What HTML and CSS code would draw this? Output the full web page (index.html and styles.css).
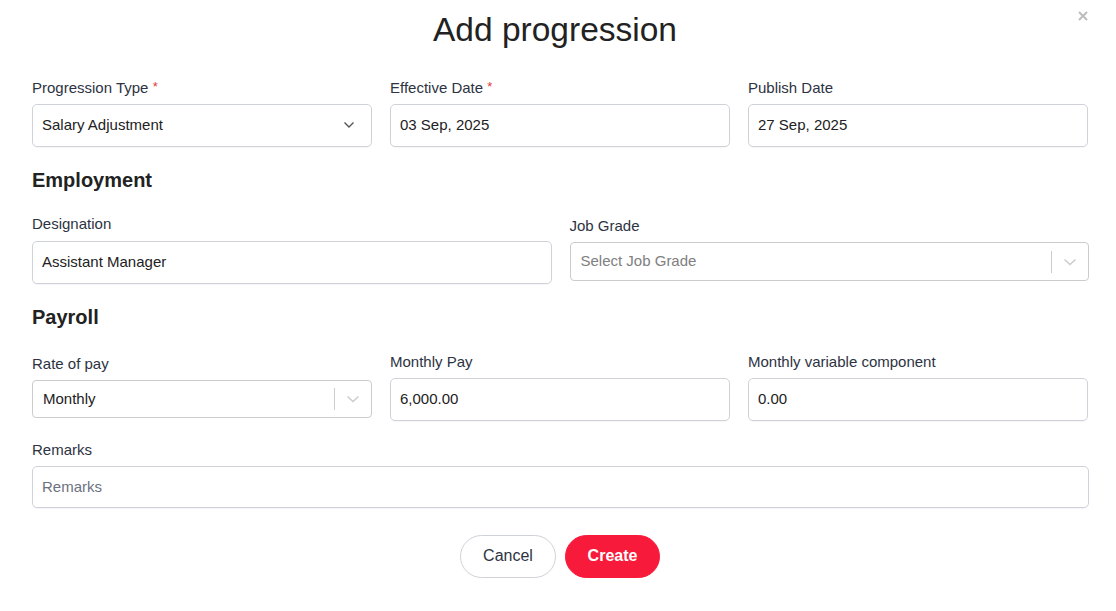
FILE: index.html
```html
<!DOCTYPE html>
<html>
<head>
<meta charset="utf-8">
<link rel="stylesheet" href="styles.css">
</head>
<body>
<div class="modal">
  <button class="close" aria-label="Close">
    <svg width="10" height="10" viewBox="0 0 10 10"><path d="M1 1L9 9M9 1L1 9" stroke="#bdbdbd" stroke-width="2"/></svg>
  </button>
  <h1 class="title">Add progression</h1>

  <div class="row row3col">
    <div class="field">
      <label class="label">Progression Type <span class="req">*</span></label>
      <div class="input select-native">
        <span>Salary Adjustment</span>
        <svg class="chev" width="12" height="8" viewBox="0 0 12 8"><path d="M1.5 1.5L6 6L10.5 1.5" fill="none" stroke="#555" stroke-width="1.4"/></svg>
      </div>
    </div>
    <div class="field">
      <label class="label">Effective Date <span class="req">*</span></label>
      <div class="input">03 Sep, 2025</div>
    </div>
    <div class="field">
      <label class="label">Publish Date</label>
      <div class="input">27 Sep, 2025</div>
    </div>
  </div>

  <h2 class="section">Employment</h2>
  <div class="row row2">
    <div class="field">
      <label class="label">Designation</label>
      <div class="input">Assistant Manager</div>
    </div>
    <div class="field field-rs2">
      <label class="label">Job Grade</label>
      <div class="rselect">
        <span class="placeholder">Select Job Grade</span>
        <span class="sep"></span>
        <svg class="rchev" width="14" height="8" viewBox="0 0 14 8"><path d="M1.5 1.5L7 6.5L12.5 1.5" fill="none" stroke="#ccc" stroke-width="1.5"/></svg>
      </div>
    </div>
  </div>

  <h2 class="section section2">Payroll</h2>
  <div class="row row3col">
    <div class="field field-rs3">
      <label class="label">Rate of pay</label>
      <div class="rselect">
        <span class="value">Monthly</span>
        <span class="sep"></span>
        <svg class="rchev" width="14" height="8" viewBox="0 0 14 8"><path d="M1.5 1.5L7 6.5L12.5 1.5" fill="none" stroke="#ccc" stroke-width="1.5"/></svg>
      </div>
    </div>
    <div class="field">
      <label class="label">Monthly Pay</label>
      <div class="input">6,000.00</div>
    </div>
    <div class="field">
      <label class="label">Monthly variable component</label>
      <div class="input">0.00</div>
    </div>
  </div>

  <div class="field remarks">
    <label class="label">Remarks</label>
    <div class="input remarks-input"><span class="placeholder2">Remarks</span></div>
  </div>

  <div class="actions">
    <button class="btn btn-cancel">Cancel</button>
    <button class="btn btn-create">Create</button>
  </div>
</div>
</body>
</html>
```

FILE: styles.css
```css
* { box-sizing: border-box; }
html, body { margin: 0; padding: 0; background: #fff; }
body {
  font-family: "Liberation Sans", Arial, Helvetica, sans-serif;
  color: #222;
  width: 1116px;
  height: 611px;
  overflow: hidden;
}
.modal {
  position: relative;
  padding: 0 27px 0 32px;
}
.close {
  position: absolute;
  top: 11px;
  right: 28px;
  border: 0;
  background: none;
  padding: 0;
  width: 10px;
  height: 10px;
  display: flex;
}
.title {
  margin: 0;
  padding: 10px 11px 0 0;
  font-size: 33.5px;
  font-weight: 400;
  line-height: 40px;
  text-align: center;
  color: #222;
  height: 79px;
}
.row {
  display: flex;
  gap: 18px;
}
.row3col { padding-right: 1px; }
.field {
  flex: 1 1 0;
  display: flex;
  flex-direction: column;
  min-width: 0;
}
.label {
  font-size: 15px;
  line-height: 18px;
  height: 18px;
  color: #2d3342;
  margin-bottom: 7px;
}
.req { color: #e53935; font-size: 13px; line-height: 0; vertical-align: 2px; }
.input {
  height: 43px;
  border: 1px solid #cfd2d8;
  border-radius: 5px;
  padding: 0 9px 2px;
  display: flex;
  align-items: center;
  font-size: 15px;
  color: #222;
  box-shadow: 0 1px 1px rgba(0,0,0,0.04);
}
.select-native { justify-content: space-between; padding-right: 16px; }
.chev { display: block; }
.section {
  margin: 0;
  font-size: 20px;
  font-weight: 700;
  line-height: 24px;
  color: #222;
  padding-top: 21px;
  height: 68px;
}
.section2 { padding-top: 21px; height: 69px; }
.rselect {
  height: 39px;
  border: 1px solid #cccccc;
  border-radius: 4px;
  display: flex;
  align-items: center;
  padding-left: 10px;
  font-size: 15px;
}
.rselect .placeholder { color: #808080; flex: 1; padding-bottom: 2px; }
.rselect .value { color: #222; flex: 1; padding-bottom: 2px; }
.sep {
  width: 1px;
  height: 22px;
  background: #cccccc;
}
.rchev { margin: 0 11px 0 11px; display: block; }
.field-rs2 .label { margin-top: 2px; }
.field-rs2 .rselect { height: 39px; }
.field-rs3 .label { margin-top: 2px; }
.field-rs3 .rselect { height: 38px; }
.row2 .field:first-child .label { margin-bottom: 8px; }
.remarks { margin-top: 20px; }
.remarks-input { height: 42px; width: 1057px; }
.placeholder2 { color: #6b7280; }
.actions {
  display: flex;
  justify-content: center;
  gap: 9px;
  margin-top: 27px;
  padding-right: 1px;
}
.btn {
  height: 43px;
  border-radius: 22px;
  font-family: "Liberation Sans", Arial, sans-serif;
  font-size: 16px;
  padding: 0 0 1px;
  cursor: pointer;
}
.btn-cancel {
  width: 96px;
  background: #fff;
  border: 1px solid #cfd2d8;
  color: #2d3342;
}
.btn-create {
  width: 95px;
  background: #f71a3a;
  border: 1px solid #f71a3a;
  color: #fff;
  font-weight: 700;
}
```
